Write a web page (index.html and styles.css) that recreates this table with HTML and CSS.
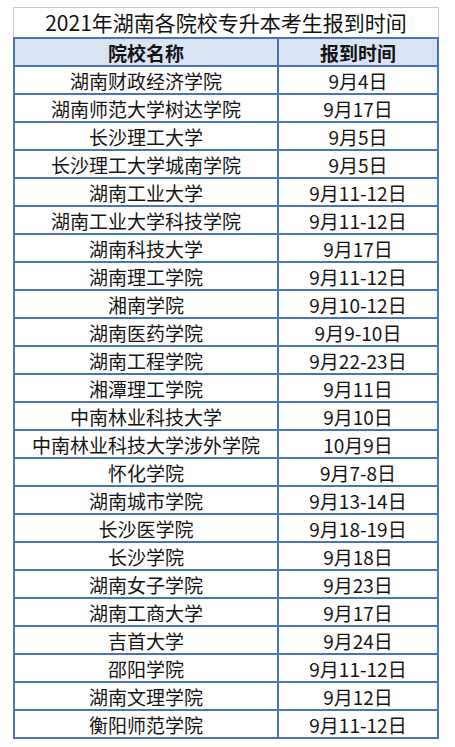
FILE: index.html
```html
<!DOCTYPE html>
<html lang="zh-CN">
<head>
<meta charset="utf-8">
<title>2021年湖南各院校专升本考生报到时间</title>
<link rel="stylesheet" href="styles.css">
</head>
<body>
<div class="sheet">
  <div class="title">2021年湖南各院校专升本考生报到时间</div>
  <div class="grid">
    <div class="cell head">院校名称</div><div class="cell head">报到时间</div>
    <div class="cell">湖南财政经济学院</div><div class="cell">9月4日</div>
    <div class="cell">湖南师范大学树达学院</div><div class="cell">9月17日</div>
    <div class="cell">长沙理工大学</div><div class="cell">9月5日</div>
    <div class="cell">长沙理工大学城南学院</div><div class="cell">9月5日</div>
    <div class="cell">湖南工业大学</div><div class="cell">9月11-12日</div>
    <div class="cell">湖南工业大学科技学院</div><div class="cell">9月11-12日</div>
    <div class="cell">湖南科技大学</div><div class="cell">9月17日</div>
    <div class="cell">湖南理工学院</div><div class="cell">9月11-12日</div>
    <div class="cell">湘南学院</div><div class="cell">9月10-12日</div>
    <div class="cell">湖南医药学院</div><div class="cell">9月9-10日</div>
    <div class="cell">湖南工程学院</div><div class="cell">9月22-23日</div>
    <div class="cell">湘潭理工学院</div><div class="cell">9月11日</div>
    <div class="cell">中南林业科技大学</div><div class="cell">9月10日</div>
    <div class="cell">中南林业科技大学涉外学院</div><div class="cell">10月9日</div>
    <div class="cell">怀化学院</div><div class="cell">9月7-8日</div>
    <div class="cell">湖南城市学院</div><div class="cell">9月13-14日</div>
    <div class="cell">长沙医学院</div><div class="cell">9月18-19日</div>
    <div class="cell">长沙学院</div><div class="cell">9月18日</div>
    <div class="cell">湖南女子学院</div><div class="cell">9月23日</div>
    <div class="cell">湖南工商大学</div><div class="cell">9月17日</div>
    <div class="cell">吉首大学</div><div class="cell">9月24日</div>
    <div class="cell">邵阳学院</div><div class="cell">9月11-12日</div>
    <div class="cell">湖南文理学院</div><div class="cell">9月12日</div>
    <div class="cell">衡阳师范学院</div><div class="cell">9月11-12日</div>
  </div>
</div>
</body>
</html>
```
FILE: styles.css
```css
html, body {
  margin: 0;
  padding: 0;
  background: #ffffff;
}
body {
  padding-top: 7px;
  font-family: "Noto Sans CJK SC", "Noto Sans", sans-serif;
  color: #141414;
}
.sheet {
  margin-left: 13px;
  width: 426px;
}
.title {
  box-sizing: border-box;
  height: 30px;
  border: 1px solid #c9c9c9;
  border-bottom: none;
  display: flex;
  align-items: center;
  justify-content: center;
  font-size: 21px;
  line-height: 1;
  color: #111;
}
.grid {
  display: grid;
  grid-template-columns: 262px 158px;
  grid-auto-rows: 26px;
  gap: 2px;
  padding: 2px;
  background: #4a72bd;
}
.cell {
  background: #ffffff;
  display: flex;
  align-items: center;
  justify-content: center;
  font-size: 19px;
  line-height: 1;
  white-space: nowrap;
}
.head {
  background: #dae3f3;
  font-weight: 700;
}
```
